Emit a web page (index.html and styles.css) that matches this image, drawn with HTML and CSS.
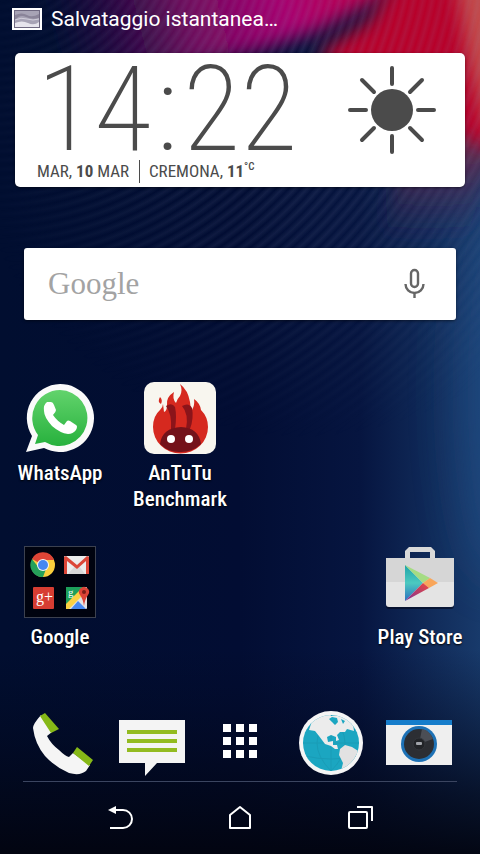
FILE: index.html
```html
<!DOCTYPE html>
<html lang="it">

<head>
    <meta charset="UTF-8">
    <meta name="viewport" content="width=device-width, initial-scale=1">
    <title>Home</title>
    <link rel="stylesheet" href="styles.css">
</head>

<body>

    <!-- wallpaper -->
    <svg class="wallpaper" viewBox="0 0 480 854" preserveAspectRatio="xMidYMid slice" aria-hidden="true">
        <defs>
            <linearGradient id="base" x1="0" y1="0" x2="1" y2="0">
                <stop offset="0" stop-color="#010e30" />
                <stop offset=".5" stop-color="#020d33" />
                <stop offset=".75" stop-color="#061540" />
                <stop offset="1" stop-color="#183a6b" />
            </linearGradient>
            <linearGradient id="fade" x1="0" y1="0" x2="0" y2="1">
                <stop offset=".76" stop-color="#020820" stop-opacity="0" />
                <stop offset=".93" stop-color="#020616" stop-opacity=".75" />
                <stop offset="1" stop-color="#02040f" stop-opacity=".95" />
            </linearGradient>
            <linearGradient id="magenta" gradientUnits="userSpaceOnUse" x1="60" y1="60" x2="380" y2="-20">
                <stop offset="0" stop-color="#3a0a4a" stop-opacity="0" />
                <stop offset=".4" stop-color="#6d0a5c" />
                <stop offset=".7" stop-color="#a80070" />
                <stop offset="1" stop-color="#c00045" />
            </linearGradient>
            <linearGradient id="mauve" gradientUnits="userSpaceOnUse" x1="0" y1="130" x2="0" y2="240">
                <stop offset="0" stop-color="#7c2848" />
                <stop offset="1" stop-color="#3a2450" stop-opacity="0" />
            </linearGradient>
            <radialGradient id="rings" gradientUnits="userSpaceOnUse" cx="-12" cy="-96" r="9" spreadMethod="repeat">
                <stop offset="0" stop-color="#8792b8" stop-opacity="0" />
                <stop offset=".5" stop-color="#8792b8" stop-opacity=".15" />
                <stop offset="1" stop-color="#8792b8" stop-opacity="0" />
            </radialGradient>
            <radialGradient id="ringMask" gradientUnits="userSpaceOnUse" cx="300" cy="100" r="340">
                <stop offset="0" stop-color="#fff" />
                <stop offset=".5" stop-color="#aaa" />
                <stop offset="1" stop-color="#000" />
            </radialGradient>
            <mask id="m"><rect width="480" height="854" fill="url(#ringMask)" /></mask>
            <filter id="soft" x="-50%" y="-50%" width="200%" height="200%"><feGaussianBlur stdDeviation="9" /></filter>
            <filter id="softer" x="-80%" y="-50%" width="260%" height="200%"><feGaussianBlur stdDeviation="24" /></filter>
        </defs>
        <rect width="480" height="854" fill="url(#base)" />
        <ellipse cx="500" cy="390" rx="40" ry="190" fill="#20518a" opacity=".6" filter="url(#softer)" />
        <path d="M40 -30H420L370 4 320 30 260 50 190 66 40 80Z" fill="url(#magenta)" filter="url(#soft)" />
        <path d="M420 60H500L492 160 462 250H380Z" fill="url(#mauve)" filter="url(#soft)" />
        <path d="M400 -30H520V110L490 150 440 120 330 70 320 52 370 20Z" fill="#b8002b" filter="url(#soft)" />
        <path d="M455 -30H540V120L486 130 468 60Z" fill="#c4534f" opacity=".9" filter="url(#soft)" />
        <rect width="480" height="854" fill="url(#rings)" mask="url(#m)" />
        <rect width="480" height="854" fill="url(#fade)" />
    </svg>

    <header class="status">
        <svg class="status-icon" viewBox="0 0 30 22" aria-hidden="true">
            <rect width="30" height="22" fill="#fff" />
            <rect x="2" y="2" width="26" height="18" fill="#6e6880" />
            <rect x="3" y="3" width="24" height="16" fill="#a7a3b5" />
            <path d="M3 7Q10 4 15 7T27 6V10Q20 12 14 9T3 12Z" fill="#8a8499" />
            <path d="M3 15Q10 12 16 15T27 14V19H3Z" fill="#e6e4ec" />
            <path d="M3 12Q9 9 15 11T27 11" fill="none" stroke="#d1cedb" />
        </svg>
        <p>Salvataggio istantanea…</p>
    </header>

    <main>
        <section class="weather">
            <div>
                <p class="clock"><span>14</span><span>:</span><span>22</span></p>
                <p class="info">
                    <span>MAR, <b>10</b> MAR</span>
                    <span class="place">CREMONA, <b>11</b><sup>°C</sup></span>
                </p>
            </div>
            <svg class="sun" viewBox="0 0 90 90" role="img" aria-label="Sereno">
                <circle cx="45" cy="45" r="21" fill="#4b4b4b" />
                <path d="M45 3V19M45 71V87M3 45H19M71 45H87M15 15L27 27M63 63L75 75M75 15L63 27M27 63L15 75" stroke="#4b4b4b" stroke-width="4" stroke-linecap="round" />
            </svg>
        </section>

        <form class="search">
            <input type="search" placeholder="Google" aria-label="Google">
            <button type="button" aria-label="Ricerca vocale">
                <svg viewBox="0 0 24 32" fill="none" stroke="#666" stroke-width="2.4">
                    <rect x="7" y="2" width="7" height="17" rx="3.5" />
                    <path d="M1.5 16A9 9 0 0 0 19.500 16M10.500 24V30" />
                </svg>
            </button>
        </form>

        <nav class="apps">
            <a href="#whatsapp">
                <svg viewBox="0 0 72 72" aria-hidden="true">
                    <defs>
                        <linearGradient id="wa" x1="0" y1="0" x2="0" y2="1">
                            <stop offset="0" stop-color="#62d36c" />
                            <stop offset="1" stop-color="#27b13d" />
                        </linearGradient>
                    </defs>
                    <path d="M36 2A34 34 0 1 1 20 66L2 70 8 54A34 34 0 0 1 36 2Z" fill="#fafafa" />
                    <path d="M36 8A28 28 0 1 1 21 60L11 62 14 53A28 28 0 0 1 36 8Z" fill="url(#wa)" />
                    <path d="M23 20H27Q29 20 30 23L32 28Q32 30 29 33Q33 39 40 43L43 39Q44 38 46 39L52 43Q54 44 52 48Q49 52 44 52Q36 51 28 44Q20 35 20 29Q19 23 23 20Z" fill="#fff" />
                </svg>
                <span>WhatsApp</span>
            </a>
            <a href="#antutu">
                <svg viewBox="0 0 72 72" aria-hidden="true">
                    <rect width="72" height="72" rx="10" fill="#f8f6ef" />
                    <path d="M36 2Q44 8 46 20Q46 25 48 28Q51 23 50 17Q56 21 57 28Q64 35 64 45A27 26 0 0 1 9 45Q9 34 16 28Q19 25 19 22L20 30Q23 29 23 23Q22 15 30 10Q28 17 32 21Q33 17 36 14Q39 8 36 2ZM16 15Q19 18 17 22Q13 20 16 15Z" fill="#d6291f" />
                    <path d="M22 24Q28 20 31 25Q33 34 31 47H27Q28 32 22 24ZM38 24Q45 20 48 26Q50 36 46 47H42Q45 32 38 24Z" fill="#8b141a" />
                    <path d="M16 62Q18 46 37 45Q55 46 57 62Q49 70 37 70Q25 71 16 62Z" fill="#74121a" />
                    <circle cx="27" cy="57" r="4" fill="#fff" />
                    <circle cx="45" cy="57" r="4" fill="#fff" />
                </svg>
                <span>AnTuTu Benchmark</span>
            </a>
            <a href="#google" class="new-row">
                <svg viewBox="0 0 72 72" aria-hidden="true">
                    <rect x=".5" y=".5" width="71" height="71" fill="#00030f" stroke="#3c414f" />
                    <!-- chrome -->
                    <circle cx="19" cy="19" r="12" fill="#fbcf3c" />
                    <path d="M19 19L8 13A12 12 0 0 1 30 14H19Z" fill="#de4536" />
                    <path d="M19 31A12 12 0 0 1 8 13L15 22 22 23Z" fill="#26a05a" />
                    <circle cx="19" cy="19" r="6" fill="#f4f4f4" />
                    <circle cx="19" cy="19" r="5" fill="#4688f1" />
                    <!-- gmail -->
                    <rect x="40" y="10" width="25" height="18" rx="1" fill="#ececec" />
                    <path d="M44 28L51 20 53 21 55 20 61 28" fill="#d8d8d8" />
                    <path d="M40 28V11L42 10 53 19 63 10 65 11V28H62V15L53 23 43 15V28Z" fill="#dc4638" />
                    <!-- google plus -->
                    <rect x="9" y="41" width="21" height="22" rx="1" fill="#d73d32" />
                    <text x="12" y="56" class="plus">g+</text>
                    <!-- maps -->
                    <rect x="42" y="41" width="21" height="22" rx="1" fill="#e3e3e3" />
                    <path d="M42 41H60L42 59Z" fill="#1da05b" />
                    <path d="M42 63V58L57 43 61 47 45 63Z" fill="#fbd143" />
                    <path d="M47 63L54 55 62 63Z" fill="#4688f1" />
                    <text x="44" y="50" class="map-g">g</text>
                    <path d="M60 60Q59 53 56 49A5 5 0 1 1 64 49Q61 53 60 60Z" fill="#dc4437" />
                    <circle cx="60" cy="46" r="2" fill="#7d1f18" />
                </svg>
                <span>Google</span>
            </a>
            <a href="#play" class="last-col">
                <svg viewBox="0 0 72 72" aria-hidden="true">
                    <defs>
                        <linearGradient id="teal" x1="0" y1="0" x2="0" y2="1">
                            <stop offset="0" stop-color="#1fa3a8" />
                            <stop offset=".5" stop-color="#4cc9c0" />
                            <stop offset="1" stop-color="#2b6fc0" />
                        </linearGradient>
                        <linearGradient id="pink" x1="0" y1="1" x2="1" y2="0">
                            <stop offset="0" stop-color="#7b2f9a" />
                            <stop offset="1" stop-color="#ef4a3c" />
                        </linearGradient>
                    </defs>
                    <path d="M21 14V5L25 1H47L51 5V14H46V6H26V14Z" fill="#d9d9d9" />
                    <path d="M2 59H70V60Q70 63 67 63H5Q2 63 2 60Z" fill="#03081c" opacity=".6" />
                    <path d="M2 12H70V58Q70 61 67 61H5Q2 61 2 58Z" fill="#e4e4e4" />
                    <path d="M2 12H70V36H2Z" fill="#d6d6d6" />
                    <path d="M21 19L39 37 21 55Z" fill="url(#teal)" />
                    <path d="M21 19L46 32 39 37Z" fill="#a5dc83" />
                    <path d="M46 32L54 37 45 42 39 37Z" fill="#f9a65a" />
                    <path d="M39 37L45 42 21 55Z" fill="url(#pink)" />
                </svg>
                <span>Play Store</span>
            </a>
        </nav>
    </main>

    <footer>
        <nav class="dock">
            <a href="#phone" aria-label="Telefono">
                <svg viewBox="0 0 72 72">
                    <path d="M18 9L29 26 24 30Q28 38 36 44Q42 50 46 51L50 47 67 59 63 65Q57 70 46 67Q32 61 22 50Q12 38 10 22Q10 18 18 9Z" fill="#f5f5f5" />
                    <path d="M17 10L22 7 36 23 28 27ZM50 47L54 41 70 54 66 60Z" fill="#86b817" />
                </svg>
            </a>
            <a href="#messages" aria-label="Messaggi">
                <svg viewBox="0 0 72 72">
                    <path d="M5 14H71V57H43L31 70V57H5Z" fill="#f4f4f4" />
                    <path d="M13 26H63M13 35H63M13 44H63" stroke="#93bb21" stroke-width="4" />
                </svg>
            </a>
            <a href="#all" aria-label="Tutte le app">
                <svg viewBox="0 0 72 72" fill="#fff">
                    <path d="M19 18h8v8h-8zM32 18h8v8h-8zM45 18h8v8h-8zM19 31h8v8h-8zM32 31h8v8h-8zM45 31h8v8h-8zM19 44h8v8h-8zM32 44h8v8h-8zM45 44h8v8h-8z" />
                </svg>
            </a>
            <a href="#internet" aria-label="Internet">
                <svg viewBox="0 0 72 72">
                    <defs>
                        <clipPath id="globe"><circle cx="36" cy="37" r="28" /></clipPath>
                    </defs>
                    <circle cx="36" cy="37" r="32" fill="#f5f5f5" />
                    <circle cx="36" cy="37" r="28" fill="#1ba6c1" />
                    <g clip-path="url(#globe)">
                        <path d="M8 37H64M10 50Q36 56 62 50M10 24Q36 18 62 24M36 9V65M36 9Q8 37 36 65M36 9Q64 37 36 65" fill="none" stroke="#1a9cb6" />
                        <path d="M14 24L18 12 34 6 36 10 42 9 50 8 58 18 59 25 52 23 50 26 45 26 42 29 44 34 41 35 41 31 36 29 32 31 33 36 38 35 38 39 42 39 43 43 40 43 36 40 30 38 24 30 20 25Z" fill="#ececec" />
                        <path d="M34 13L37 11 42 12 43 16 40 19 37 16ZM46 13L50 15 48 18Z" fill="#1ba6c1" />
                        <path d="M45 43L50 39 57 41 65 46 66 52 58 60 52 66 46 65 48 57 44 49Z" fill="#e2e2e2" />
                    </g>
                </svg>
            </a>
            <a href="#camera" aria-label="Fotocamera">
                <svg viewBox="0 0 72 72">
                    <rect x="1" y="14" width="66" height="45" fill="#efefef" />
                    <rect x="1" y="14" width="66" height="5" fill="#167dcb" />
                    <circle cx="34" cy="38" r="18" fill="#1d71b5" />
                    <circle cx="34" cy="38" r="15" fill="#2c2e33" />
                    <path d="M34 38L37 23A15 15 0 0 1 48 33Z" fill="#4b4e55" />
                    <circle cx="34" cy="38" r="6" fill="#222428" stroke="#33363b" />
                    <rect x="31" y="36" width="6" height="3" rx="1" fill="#a0a3a9" />
                </svg>
            </a>
        </nav>
        <div class="keys">
            <button type="button" aria-label="Indietro">
                <svg viewBox="0 0 28 28" fill="none" stroke="#fff" stroke-width="2">
                    <path d="M8 6H17A9 9 0 0 1 17 24H4" />
                    <path d="M2 6L10 2V10Z" fill="#fff" stroke="none" />
                </svg>
            </button>
            <button type="button" aria-label="Home">
                <svg viewBox="0 0 28 28" fill="none" stroke="#fff" stroke-width="2" stroke-linejoin="round">
                    <path d="M4 11L14 3 24 11V24H4Z" />
                </svg>
            </button>
            <button type="button" aria-label="App recenti">
                <svg viewBox="0 0 28 28" fill="none" stroke="#fff" stroke-width="2" stroke-linejoin="round">
                    <rect x="3" y="8" width="18" height="16" rx="1" />
                    <path d="M11 3H26V17" />
                </svg>
            </button>
        </div>
    </footer>

</body>

</html>
```
FILE: styles.css
```css
* {
    box-sizing: border-box;
}

body {
    margin: 0;
    min-height: 100vh;
    display: flex;
    flex-direction: column;
    position: relative;
    background-color: #020d30;
    color: white;
    font-family: Roboto, sans-serif;
}

p {
    margin: 0;
}

svg {
    display: block;
}

button {
    border: none;
    background: none;
    padding: 0;
    cursor: pointer;
}

a {
    color: white;
    text-decoration: none;
}

.wallpaper {
    position: absolute;
    top: 0;
    left: 0;
    width: 100%;
    height: 100%;
    z-index: -1;
}

.status {
    display: flex;
    align-items: center;
    gap: 9px;
    height: 38px;
    padding: 0 12px;
    font-size: 21px;
}

.status-icon {
    width: 30px;
    height: 22px;
}

/* clock and weather */
.weather {
    display: flex;
    justify-content: space-between;
    margin: 15px 15px 0;
    padding: 7px 28px 4px 22px;
    border-radius: 5px;
    background-color: white;
    color: #4b4b4b;
    box-shadow: 0 1px 3px rgba(0, 0, 0, 0.5);
}

.clock {
    display: flex;
    gap: 5px;
    font-family: "Roboto Condensed", Roboto, sans-serif;
    font-size: 118px;
    font-weight: 200;
    line-height: 100px;
}

.info {
    display: flex;
    font-family: "Roboto Condensed", Roboto, sans-serif;
    font-size: 17px;
    line-height: 23px;
}

.place {
    margin-left: 10px;
    padding-left: 9px;
    border-left: 1px solid #4b4b4b;
}

.info sup {
    font-size: 11px;
    font-weight: 500;
    line-height: 0;
}

.sun {
    width: 90px;
    height: 90px;
    margin-top: 5px;
}

/* search */
.search {
    display: flex;
    align-items: center;
    height: 72px;
    margin: 61px 24px 0;
    padding: 0 28px 0 24px;
    border-radius: 3px;
    background-color: white;
    box-shadow: 0 1px 3px rgba(0, 0, 0, 0.5);
}

.search input {
    flex: 1;
    min-width: 0;
    padding: 0;
    border: none;
    outline: none;
    background: none;
    font-family: "Liberation Serif", serif;
    font-size: 31px;
    color: #666;
}

.search input::placeholder {
    color: #a3a3a3;
    opacity: 1;
}

.search svg {
    width: 24px;
    height: 32px;
}

/* app icons */
.apps {
    display: grid;
    grid-template-columns: repeat(4, 1fr);
    row-gap: 34px;
    margin-top: 62px;
}

.apps a {
    display: flex;
    flex-direction: column;
    align-items: center;
    gap: 6px;
    padding: 0 10px;
    font-family: "Roboto Condensed", Roboto, sans-serif;
    font-size: 21px;
    font-weight: 500;
    line-height: 26px;
    text-align: center;
    text-shadow: 0 1px 2px black;
}

.apps svg,
.dock svg {
    width: 72px;
    height: 72px;
}

.new-row {
    grid-column: 1;
}

.last-col {
    grid-column: 4;
}

.plus,
.map-g {
    font-family: "Liberation Serif", serif;
    font-size: 16px;
    fill: white;
    text-shadow: none;
}

.map-g {
    font-size: 11px;
}

/* dock and navigation keys */
footer {
    margin-top: auto;
}

.dock {
    display: flex;
    justify-content: space-between;
    margin: 0 23px;
    padding-bottom: 3px;
    border-bottom: 1px solid #3b4560;
}

.keys {
    display: flex;
    justify-content: center;
    height: 72px;
}

.keys button {
    width: 25%;
}

.keys svg {
    width: 28px;
    height: 28px;
    margin: 0 auto;
}
```
